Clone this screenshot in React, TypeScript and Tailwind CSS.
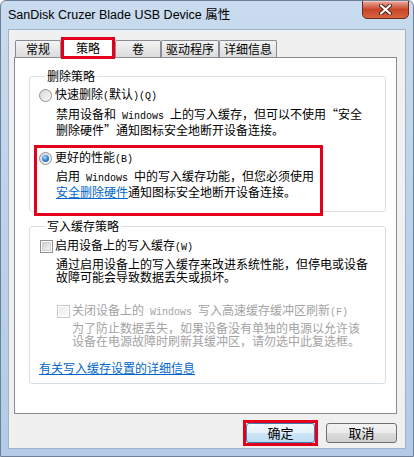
import type { ReactNode } from "react"

const body = "font-['Noto_Sans_CJK_SC',sans-serif] text-[12px] leading-[13px]"

// half-width latin, like SimSun's 6px ascii
function L({ children }: { children: ReactNode }) {
    return <span className="font-['Liberation_Mono',monospace] text-[10px]">{children}</span>
}

function Radio({ checked }: { checked?: boolean }) {
    return (
        <span className="flex h-[13px] w-[13px] shrink-0 items-center justify-center rounded-full border border-[#8e8f8f] bg-linear-to-br from-[#d6d6d6] to-[#fbfbfb]">
            {checked && (
                <span className="h-[7px] w-[7px] rounded-full bg-[radial-gradient(circle_at_40%_35%,#b8e0ff_0%,#3d8ad4_45%,#154d89_100%)]" />
            )}
        </span>
    )
}

function Check({ disabled }: { disabled?: boolean }) {
    return (
        <span
            className={
                disabled
                    ? "flex h-[13px] w-[13px] shrink-0 items-center justify-center border border-[#c8c8c8] bg-white"
                    : "flex h-[13px] w-[13px] shrink-0 items-center justify-center border border-[#8e8f8f] bg-white"
            }
        >
            <span
                className={
                    disabled
                        ? "h-[9px] w-[9px] bg-linear-to-br from-[#ececec] to-[#fafafa]"
                        : "h-[9px] w-[9px] border border-[#cfcfcf] bg-linear-to-br from-[#d0d0d0] to-[#f6f6f6]"
                }
            />
        </span>
    )
}

function Group({ title, children, className }: { title: string; children: ReactNode; className: string }) {
    return (
        <fieldset className={`w-[357px] rounded-[3px] border border-[#d5dfe5] pl-[9px] ${className}`}>
            <legend className="ml-[6px] px-[2px] text-[12px] leading-[12px]">{title}</legend>
            {children}
        </fieldset>
    )
}

const tabs = [
    { label: "常规", w: "w-[46px]" },
    { label: "策略", w: "w-[54px]", active: true },
    { label: "卷", w: "w-[46px]" },
    { label: "驱动程序", w: "w-[58px]" },
    { label: "详细信息", w: "w-[58px]" },
]

export default function App() {
    return (
        <div className="flex h-[457px] w-[414px] flex-col overflow-hidden rounded-t-[6px] border border-[#6d8098] bg-linear-to-b from-[#c9dbee] via-[#bcd2ea] to-[#b3cbe6]">
            {/* title bar */}
            <div className="flex h-[28px] shrink-0 items-start">
                <span className="mt-[7px] ml-[7px] font-['Liberation_Sans','Noto_Sans_CJK_SC',sans-serif] text-[12.5px] leading-[15px] text-black">
                    SanDisk Cruzer Blade USB Device 属性
                </span>
                <div className="mt-[-1px] mr-[4px] ml-auto flex h-[19px] w-[47px] items-center justify-center rounded-b-[5px] border border-[#6b2a1f] bg-linear-to-b from-[#e9a99b] via-[#c9452a] to-[#d8643f] shadow-[inset_0_1px_0_#f4c7bc]">
                    <svg width="13" height="11" viewBox="0 0 13 11">
                        <path
                            d="M2 1.5 L11 9.5 M11 1.5 L2 9.5"
                            stroke="#4a1d14"
                            strokeWidth="4"
                            strokeLinecap="round"
                        />
                        <path
                            d="M2 1.5 L11 9.5 M11 1.5 L2 9.5"
                            stroke="#ffffff"
                            strokeWidth="2.2"
                            strokeLinecap="round"
                        />
                    </svg>
                </div>
            </div>

            {/* client area */}
            <div className="mx-[7px] flex h-[420px] flex-col border border-[#9fb3ca] bg-[#f0f0f0] pt-[7px] pr-[8px] pl-[5px] font-['Noto_Sans_CJK_SC',sans-serif]">
                <div className="ml-px flex h-[20px] items-end text-[12px] leading-[14px]">
                    {tabs.map((t) =>
                        t.active ? (
                            <div
                                key={t.label}
                                className={`relative z-10 -mb-[2px] flex h-[22px] ${t.w} justify-center border-[3px] border-[#e2001a] bg-white pt-px`}
                            >
                                {t.label}
                            </div>
                        ) : (
                            <div
                                key={t.label}
                                className={`flex h-[17px] ${t.w} items-center justify-center rounded-t-[2px] border border-b-0 border-[#898c95] bg-linear-to-b from-[#f4f4f4] to-[#dcdcdc] text-black`}
                            >
                                {t.label}
                            </div>
                        )
                    )}
                </div>

                {/* tab panel */}
                <div className={`flex h-[357px] flex-col border border-[#898c95] bg-white pl-[14px] ${body}`}>
                    <Group title="删除策略" className="mt-[12px] pt-[7px]">
                        <div className="flex h-[12px] items-center gap-[3px]">
                            <Radio />
                            <span>
                                快速删除<L>(</L>默认<L>)(Q)</L>
                            </span>
                        </div>
                        <div className="mt-[6px] pl-[17px] whitespace-nowrap">
                            <div>
                                禁用设备和<L> Windows </L>上的写入缓存，但可以不使用“安全
                            </div>
                            <div>删除硬件”通知图标安全地断开设备连接。</div>
                        </div>
                        <div className="relative -mb-[5px] mt-[9px] -ml-[5px] w-[289px] border-[3px] border-[#e2001a] bg-white pt-[4px] pb-[15px] pl-[2px]">
                            <div className="flex h-[12px] items-center gap-[3px]">
                                <Radio checked />
                                <span>
                                    更好的性能<L>(B)</L>
                                </span>
                            </div>
                            <div className="mt-[5px] pl-[17px] whitespace-nowrap">
                                <div>
                                    启用<L> Windows </L>中的写入缓存功能，但您必须使用
                                </div>
                                <div>
                                    <span className="text-[#0066cc] underline">安全删除硬件</span>
                                    通知图标安全地断开设备连接。
                                </div>
                            </div>
                        </div>
                    </Group>

                    <Group title="写入缓存策略" className="mt-[8px] pt-[8px] pb-[9px]">
                        <div className="ml-px flex h-[12px] items-center gap-[2px]">
                            <Check />
                            <span>
                                启用设备上的写入缓存<L>(W)</L>
                            </span>
                        </div>
                        <div className="mt-[5px] pl-[17px] whitespace-nowrap">
                            <div>通过启用设备上的写入缓存来改进系统性能，但停电或设备</div>
                            <div>故障可能会导致数据丢失或损坏。</div>
                        </div>
                        <div className="mt-[22px] ml-[18px] flex h-[12px] items-center gap-[2px] text-[#a3a3a3]">
                            <Check disabled />
                            <span className="whitespace-nowrap">
                                关闭设备上的<L> Windows </L>写入高速缓存缓冲区刷新<L>(F)</L>
                            </span>
                        </div>
                        <div className="mt-[4px] pl-[33px] whitespace-nowrap text-[#a3a3a3]">
                            <div>为了防止数据丢失，如果设备没有单独的电源以允许该</div>
                            <div>设备在电源故障时刷新其缓冲区，请勿选中此复选框。</div>
                        </div>
                        <div className="mt-[15px] leading-[12px] text-[#0066cc] underline">
                            有关写入缓存设置的详细信息
                        </div>
                    </Group>
                </div>

                {/* buttons */}
                <div className="mt-[6px] flex items-start justify-end gap-[8px] text-[13px]">
                    <div className="border-[3px] border-[#e2001a]">
                        <button className="flex h-[20px] w-[69px] items-center justify-center rounded-[3px] border border-[#3c7fb1] bg-[linear-gradient(to_bottom,#f3f9fd_0%,#e4f1fb_50%,#cfe6f7_50%,#bddcf3_100%)] leading-[14px]">
                            确定
                        </button>
                    </div>
                    <button className="mt-[3px] flex h-[20px] w-[71px] items-center justify-center rounded-[3px] border border-[#707070] bg-[linear-gradient(to_bottom,#f2f2f2_0%,#ebebeb_50%,#dddddd_50%,#cfcfcf_100%)] leading-[14px]">
                        取消
                    </button>
                </div>
            </div>
        </div>
    )
}
